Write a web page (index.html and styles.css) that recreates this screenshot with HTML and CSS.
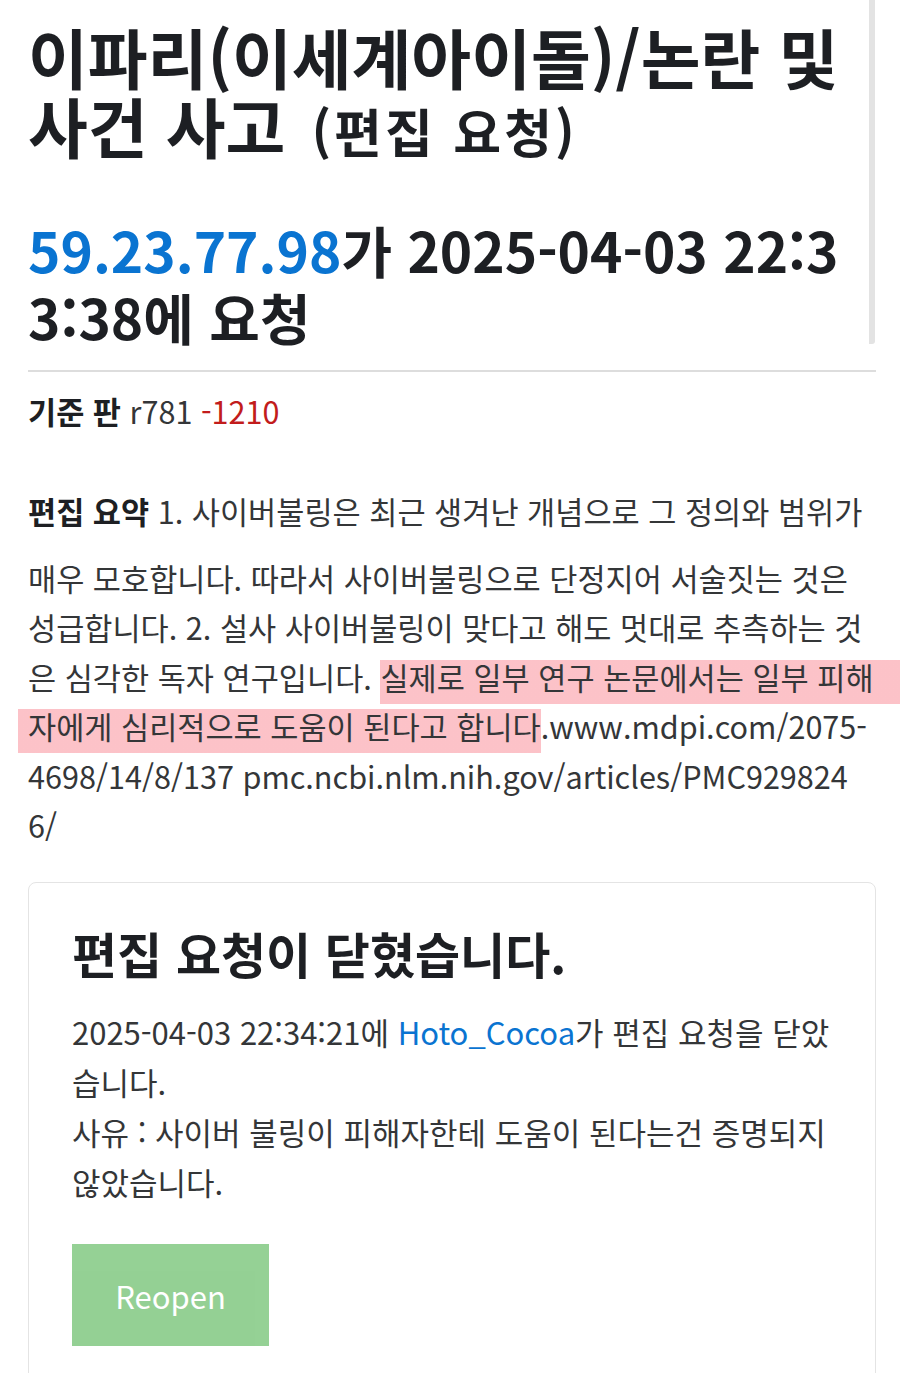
FILE: index.html
```html
<!DOCTYPE html>
<html lang="ko">
<head>
<meta charset="utf-8">
<title>이파리(이세계아이돌)/논란 및 사건 사고 (편집 요청)</title>
<link rel="stylesheet" href="styles.css">
</head>
<body>
<div class="page">
  <header class="doc-head">
    <h1 class="doc-title">이파리(이세계아이돌)/논란 및 사건 사고<span class="doc-sub">(편집 요청)</span></h1>
    <h2 class="req-line"><a class="link" href="#">59.23.77.98</a>가 2025-04-03 22:33:38에 요청</h2>
  </header>
  <hr class="rule">
  <p class="meta"><strong class="label">기준 판</strong> r781 <span class="diff-minus">-1210</span></p>
  <p class="summary"><strong class="label label-tall">편집 요약</strong> 1. 사이버불링은 최근 생겨난 개념으로 그 정의와 범위가 매우 모호합니다. 따라서 사이버불링으로 단정지어 서술짓는 것은 성급합니다. 2. 설사 사이버불링이 맞다고 해도 멋대로 추측하는 것은 심각한 독자 연구입니다. <mark class="hl hl-start">실제로 일부 연구 논문에서는 일부 피해</mark><mark class="hl hl-end">자에게 심리적으로 도움이 된다고 합니다</mark>.www.mdpi.com/2075-4698/14/8/137 pmc.ncbi.nlm.nih.gov/articles/PMC9298246/</p>
  <section class="card">
    <h3 class="card-title">편집 요청이 닫혔습니다.</h3>
    <p class="card-text">2025-04-03 22:34:21에 <a class="link" href="#">Hoto_Cocoa</a>가 편집 요청을 닫았습니다.<br>사유 : 사이버 불링이 피해자한테 도움이 된다는건 증명되지 않았습니다.</p>
    <button class="btn-reopen" type="button" disabled>Reopen</button>
  </section>
</div>
</body>
</html>
```

FILE: styles.css
```css
html, body {
  margin: 0;
  padding: 0;
  background: #ffffff;
}

body {
  font-family: "Noto Sans CJK KR", "Noto Sans", sans-serif;
  color: #343638;
}

.page {
  padding: 0 24px 0 28px;
}

.doc-head {
  display: flow-root;
  padding-top: 22px;
  padding-right: 6px;
  margin-right: 1px;
  border-right: 6px solid #e3e3e3;
  border-bottom-right-radius: 3px;
}

.doc-title {
  margin: 0;
  font-size: 65px;
  line-height: 69px;
  font-weight: 700;
  color: #1d1f23;
}

.doc-sub {
  font-size: 52px;
  line-height: 1;
  margin-left: 26px;
  letter-spacing: 3px;
}

.req-line {
  margin: 56px 0 -6px;
  font-size: 55px;
  line-height: 67px;
  font-weight: 700;
  color: #1d1f23;
  word-break: break-all;
}

.link {
  color: #0a74d1;
  text-decoration: none;
}

.rule {
  margin: 26px 0 0;
  border: 0;
  height: 2px;
  background: #dddddd;
}

.meta {
  margin: 14px 0 0;
  font-size: 30.6px;
  line-height: 50px;
}

.label {
  font-weight: 700;
  color: #1d1f23;
}

.diff-minus {
  color: #c21c1c;
}

.summary {
  margin: 32px 0 0;
  font-size: 30.6px;
  line-height: 49.4px;
  word-break: break-all;
}

.label-tall {
  line-height: 86px;
}

.hl {
  color: inherit;
  background: linear-gradient(to bottom, transparent 5px, rgba(248, 110, 124, 0.42) 5px);
  padding-bottom: 5px;
}

.hl-start {
  padding-right: 30px;
  margin-right: -30px;
}

.hl-end {
  padding-left: 10px;
  margin-left: -10px;
}

.card {
  margin-top: 32px;
  border: 1px solid #e4e4e4;
  border-radius: 8px;
  padding: 40px 43px 44px;
}

.card-title {
  margin: 0;
  font-size: 49px;
  line-height: 60px;
  font-weight: 700;
  color: #1d1f23;
}

.card-text {
  margin: 24px 0 0;
  font-size: 31px;
  line-height: 50px;
}

.btn-reopen {
  display: block;
  margin-top: 37px;
  width: 197px;
  height: 102px;
  border: 0;
  border-radius: 0;
  background: #5cb85c;
  opacity: 0.65;
  color: #ffffff;
  font-family: inherit;
  font-size: 31px;
}
```
